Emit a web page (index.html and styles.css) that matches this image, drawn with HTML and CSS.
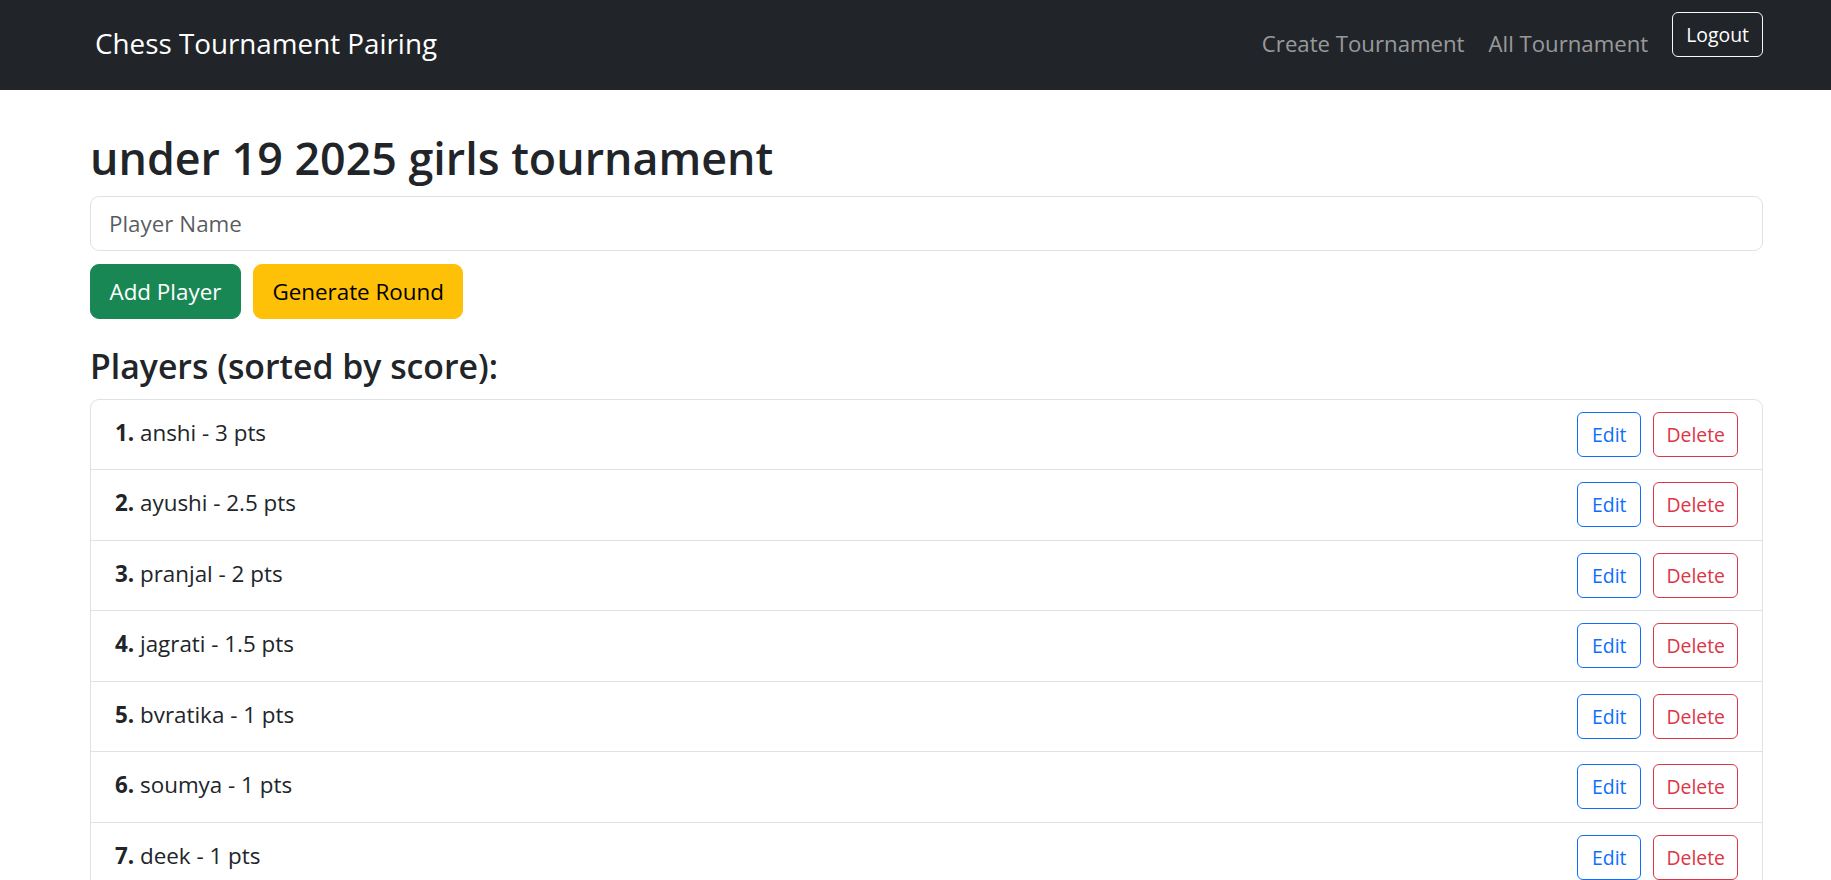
FILE: index.html
```html
<!DOCTYPE html>
<html lang="en">
<head>
<meta charset="utf-8">
<title>Chess Tournament Pairing</title>
<link rel="stylesheet" href="styles.css">
</head>
<body>
<nav class="navbar">
  <div class="nav-inner">
    <a class="brand" href="#">Chess Tournament Pairing</a>
    <div class="nav-right">
      <a class="nav-link" href="#">Create Tournament</a>
      <a class="nav-link" href="#">All Tournament</a>
      <button class="btn-logout">Logout</button>
    </div>
  </div>
</nav>
<main class="container">
  <h2 class="title">under 19 2025 girls tournament</h2>
  <input class="input" type="text" placeholder="Player Name">
  <div class="actions">
    <button class="btn btn-success">Add Player</button>
    <button class="btn btn-warning">Generate Round</button>
  </div>
  <h4 class="section-title">Players (sorted by score):</h4>
  <ul class="list">
    <li class="item"><span class="name"><strong>1.</strong> anshi - 3 pts</span><div class="item-actions"><button class="btn-sm btn-edit">Edit</button><button class="btn-sm btn-delete">Delete</button></div></li>
    <li class="item"><span class="name"><strong>2.</strong> ayushi - 2.5 pts</span><div class="item-actions"><button class="btn-sm btn-edit">Edit</button><button class="btn-sm btn-delete">Delete</button></div></li>
    <li class="item"><span class="name"><strong>3.</strong> pranjal - 2 pts</span><div class="item-actions"><button class="btn-sm btn-edit">Edit</button><button class="btn-sm btn-delete">Delete</button></div></li>
    <li class="item"><span class="name"><strong>4.</strong> jagrati - 1.5 pts</span><div class="item-actions"><button class="btn-sm btn-edit">Edit</button><button class="btn-sm btn-delete">Delete</button></div></li>
    <li class="item"><span class="name"><strong>5.</strong> bvratika - 1 pts</span><div class="item-actions"><button class="btn-sm btn-edit">Edit</button><button class="btn-sm btn-delete">Delete</button></div></li>
    <li class="item"><span class="name"><strong>6.</strong> soumya - 1 pts</span><div class="item-actions"><button class="btn-sm btn-edit">Edit</button><button class="btn-sm btn-delete">Delete</button></div></li>
    <li class="item"><span class="name"><strong>7.</strong> deek - 1 pts</span><div class="item-actions"><button class="btn-sm btn-edit">Edit</button><button class="btn-sm btn-delete">Delete</button></div></li>
  </ul>
</main>
</body>
</html>
```

FILE: styles.css
```css
* { box-sizing: border-box; }

body {
  margin: 0;
  font-family: "Open Sans", "Noto Sans", sans-serif;
  font-size: 22.4px;
  line-height: 36px;
  color: #212529;
  background: #fff;
}

.navbar {
  background: #212529;
  height: 90px;
}

.nav-inner {
  margin: 0 68px 0 90px;
  height: 100%;
  display: flex;
  justify-content: space-between;
  align-items: flex-start;
}

.brand {
  margin-top: 21px;
  padding-left: 5px;
  font-size: 27.8px;
  line-height: 45px;
  color: #fff;
  text-decoration: none;
}

.nav-right {
  display: flex;
  align-items: flex-start;
}

.nav-link {
  margin-top: 26px;
  padding: 0 12px;
  font-size: 22.2px;
  line-height: 36px;
  color: rgba(255, 255, 255, 0.55);
  text-decoration: none;
}

.btn-logout {
  margin-top: 12px;
  margin-left: 12px;
  height: 45px;
  padding: 0 13px;
  font-family: inherit;
  font-size: 19.4px;
  line-height: 43px;
  color: #fff;
  background: transparent;
  border: 1px solid #f8f9fa;
  border-radius: 6px;
}

.container {
  margin: 0 68px 0 90px;
}

.title {
  margin: 39px 0 9px;
  font-size: 44.8px;
  font-weight: 600;
  line-height: 57.6px;
}

.input {
  display: block;
  width: 100%;
  height: 55px;
  padding: 0 18px;
  font-family: inherit;
  font-size: 22.4px;
  color: #212529;
  border: 1px solid #dee2e6;
  border-radius: 9px;
  outline: none;
}

.input::placeholder {
  color: rgba(33, 37, 41, 0.75);
}

.actions {
  display: flex;
  gap: 12px;
  margin-top: 13px;
}

.btn {
  height: 55px;
  padding: 0 18.5px;
  font-family: inherit;
  font-size: 22.4px;
  border: 1px solid transparent;
  border-radius: 9px;
}

.btn-success {
  background: #198754;
  border-color: #198754;
  color: #fff;
}

.btn-warning {
  background: #ffc107;
  border-color: #ffc107;
  color: #000;
}

.section-title {
  margin: 26px 0 11px;
  font-size: 33.8px;
  font-weight: 600;
  line-height: 43.2px;
}

.list {
  margin: 0;
  padding: 0;
  list-style: none;
  border: 1px solid #dee2e6;
  border-radius: 9px;
}

.item {
  display: flex;
  justify-content: space-between;
  padding: 12px 24px 12.5px;
}

.item + .item {
  border-top: 1px solid #dee2e6;
}

.name {
  padding-top: 3px;
}

.name strong {
  font-weight: 700;
}

.item-actions {
  display: flex;
  gap: 12px;
}

.btn-sm {
  height: 45px;
  padding: 0 12px;
  font-family: inherit;
  font-size: 19.4px;
  line-height: 43px;
  background: transparent;
  border: 1px solid;
  border-radius: 6px;
}

.btn-edit {
  padding: 0 14px;
  color: #0d6efd;
  border-color: #0d6efd;
}

.btn-delete {
  color: #dc3545;
  border-color: #dc3545;
}
```
